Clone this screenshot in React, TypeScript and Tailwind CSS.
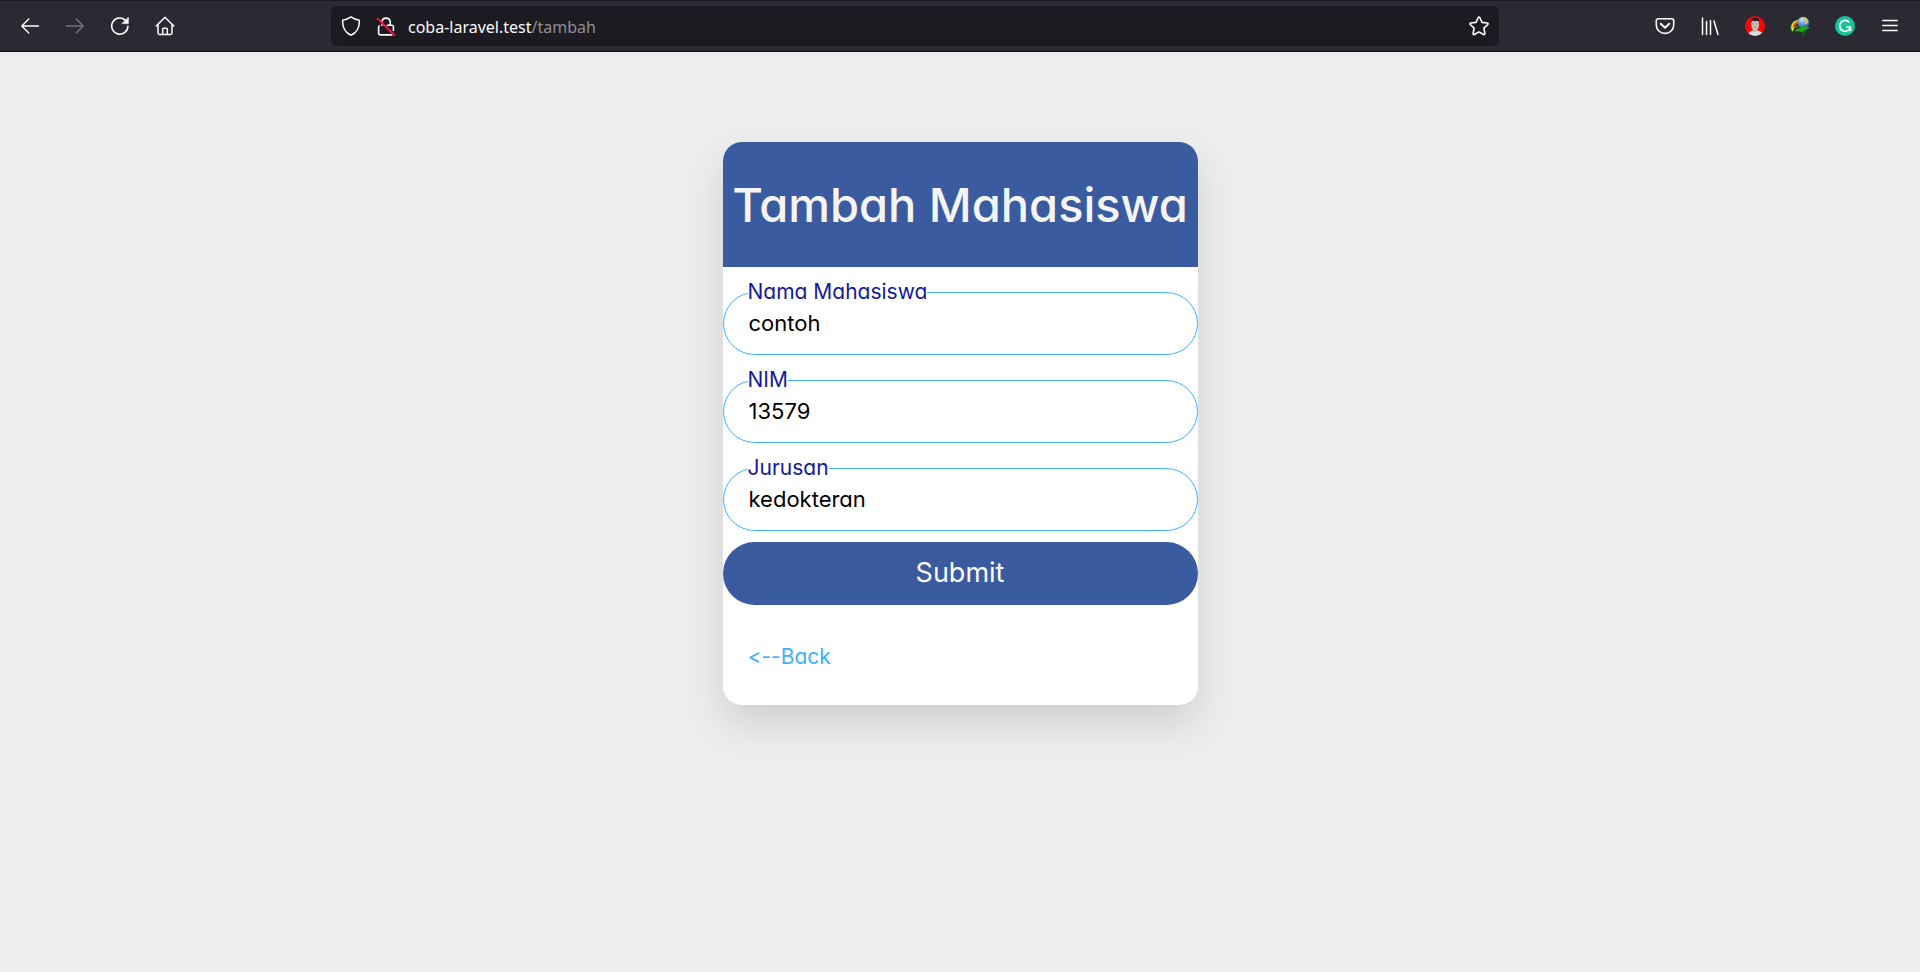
import type { ReactNode } from "react";

function ToolButton({ label, children, dim }: { label: string; children: ReactNode; dim?: boolean }) {
  return (
    <button
      type="button"
      aria-label={label}
      className={`flex h-10 w-[45px] items-center justify-center ${dim ? "text-[#77767e]" : "text-[#fbfbfe]"}`}
    >
      {children}
    </button>
  );
}

const line = {
  width: 20,
  height: 20,
  viewBox: "0 0 20 20",
  fill: "none",
  stroke: "currentColor",
  strokeWidth: 1.4,
  strokeLinecap: "round" as const,
  strokeLinejoin: "round" as const,
};

function BackIcon() {
  return (
    <svg {...line}>
      <path d="M18.5 10H1.8M8.8 3L1.8 10l7 7" />
    </svg>
  );
}

function ForwardIcon() {
  return (
    <svg {...line}>
      <path d="M1.5 10h16.7M11.2 3l7 7-7 7" />
    </svg>
  );
}

function ReloadIcon() {
  return (
    <svg {...line} strokeWidth={1.6}>
      <path d="M17.9 10.2a8.1 8.1 0 1 1-2.6-6.1" />
      <path d="M18.4 1.4v6.2h-6.2z" fill="currentColor" strokeWidth={0.6} />
    </svg>
  );
}

function HomeIcon() {
  return (
    <svg {...line} strokeWidth={1.5}>
      <path d="M1.2 10L10 1.2l8.8 8.8M3 8.6v8.2a1.7 1.7 0 0 0 1.7 1.7h10.6a1.7 1.7 0 0 0 1.7-1.7V8.6" />
      <path d="M7.7 18.3v-5a1 1 0 0 1 1-1.1h2.6a1 1 0 0 1 1 1.1v5" />
    </svg>
  );
}

function ShieldIcon() {
  return (
    <svg {...line} strokeWidth={1.5}>
      <path d="M10 .9c2.6 1.9 5.4 3 8.3 3.4C18.7 11 16.2 16.5 10 19.2 3.8 16.5 1.3 11 1.7 4.3 4.6 3.9 7.4 2.8 10 .9z" />
    </svg>
  );
}

function LockIcon() {
  return (
    <svg {...line} strokeWidth={1.6}>
      <path d="M5.9 5.5a4.2 4.2 0 0 1 8.3.3v3.4M6 8.6v.7M3.4 9.9c-.5.3-.8.8-.8 1.4v6a1.6 1.6 0 0 0 1.6 1.6h11.6M11.5 9.3h4.3a1.6 1.6 0 0 1 1.6 1.6v3.5" />
      <path d="M1.8 2.7l16.7 16.5" stroke="#f01843" strokeWidth={1.9} />
    </svg>
  );
}

function StarIcon() {
  return (
    <svg {...line} strokeWidth={1.6}>
      <path d="M9.2 1.5a.9.9 0 0 1 1.6 0l2.2 4.9 5.3.6a.9.9 0 0 1 .5 1.5l-3.9 3.7 1 5.3a.9.9 0 0 1-1.3 1L10 15.9l-4.6 2.6a.9.9 0 0 1-1.3-1l1-5.3-3.9-3.7A.9.9 0 0 1 1.7 7L7 6.4z" />
    </svg>
  );
}

function PocketIcon() {
  return (
    <svg {...line} strokeWidth={1.6}>
      <path d="M3.2 2.8h13.6a1.9 1.9 0 0 1 1.9 1.9v4.5a8.7 8.2 0 0 1-17.4 0V4.7a1.9 1.9 0 0 1 1.9-1.9z" />
      <path d="M5.7 7.7l4.3 4.1 4.3-4.1" strokeWidth={1.9} />
    </svg>
  );
}

function LibraryIcon() {
  return (
    <svg {...line} strokeWidth={1.5}>
      <path d="M2.500 2v16.500M6.500 5.500v13M10.500 4.500v14M14 5l4 13.500" />
    </svg>
  );
}

function AvatarIcon() {
  return (
    <svg width="20" height="20" viewBox="0 0 20 20">
      <clipPath id="avatar-clip">
        <circle cx="10" cy="10" r="10" />
      </clipPath>
      <g clipPath="url(#avatar-clip)">
        <rect width="20" height="20" fill="#fb0506" />
        <path d="M3 20c0-3.600 1.400-4.500 4.600-5.600h5.200c3.300 1.100 4.600 2 4.800 5.600z" fill="#dedddf" />
        <path d="M7.800 11.500h4.700v3.200l-2.400 1.700-2.300-1.700z" fill="#c9b9b6" />
        <ellipse cx="10.100" cy="8.500" rx="4" ry="5.500" fill="#d0c0bd" />
        <path d="M5.900 7.200C5.200 3.200 7.200 1.400 10.200 1.400s4.900 2 4.100 5.800l-.8-2.400c-2.200.5-4.600.5-6.800-.1z" fill="#29262b" />
        <path d="M7.700 7.900h1.500M11 7.900h1.500M8.800 11.300h2.500" stroke="#75686b" strokeWidth=".7" />
      </g>
    </svg>
  );
}

function DownloadManagerIcon() {
  return (
    <svg width="20" height="20" viewBox="0 0 20 20">
      <defs>
        <radialGradient id="globe" cx=".4" cy=".25" r=".8">
          <stop offset="0" stopColor="#d4e8f7" />
          <stop offset=".5" stopColor="#5c93d0" />
          <stop offset="1" stopColor="#1d4587" />
        </radialGradient>
      </defs>
      <path d="M8 3.500C3 4.300-.4 8.200.2 12.800c.3 2.500 1.500 3.900 3 4.400C2.600 13.700 5 11 9.500 10.600z" fill="#0d6a24" />
      <path d="M8 4C3.800 4.600.8 8.200 1.200 11.900c.2 1.700.9 2.900 2 3.500C3.200 12.200 5.500 10.300 9.200 10z" fill="#f4d92b" />
      <path d="M8.200 5.200C4.800 5.900 2.500 8.800 2.900 12 4.200 9.900 6 8.800 9 8.500z" fill="#e04a22" />
      <path d="M9 7.600c-2.600.4-4.300 1.900-5.100 4.300C5.200 10.500 7 9.800 9.500 9.800z" fill="#22202a" />
      <circle cx="13.300" cy="6.700" r="6" fill="url(#globe)" />
      <path d="M14 1.300c2.300.5 4 2.300 4.600 4.400-1.200 1.600-2.100 2.800-3.700 2.600-.5-1.600.5-2.400.1-3.500-1.200-.9-1.700-2-1-3.500z" fill="#d3c963" />
      <path d="M4.500 15.500c1.400-2.700 3.700-3.700 6.500-3.300l-.5-2.200 9.300 1-7.500 8.700-.2-3.800c-2.900-.7-5.200-.8-7.600-.4z" fill="#24a51d" />
      <path d="M12.100 15.900l7.700-4.900-7.500 8.700z" fill="#075d12" />
    </svg>
  );
}

function GrammarlyIcon() {
  return (
    <svg width="20" height="20" viewBox="0 0 20 20">
      <circle cx="10" cy="10" r="10" fill="#15c39a" />
      <path
        d="M14.200 6.400a5.400 5.400 0 1 0 .9 5.400M11.200 11h4.200v4.200"
        fill="none"
        stroke="#fff"
        strokeWidth="1.700"
        strokeLinejoin="round"
      />
    </svg>
  );
}

function MenuIcon() {
  return (
    <svg {...line} strokeWidth={1.5}>
      <path d="M2.800 4.500h14.400M2.800 9.500h14.400M2.800 14.500h14.400" />
    </svg>
  );
}

function Toolbar() {
  return (
    <header className="flex h-[52px] items-center border-t border-b border-t-[#1c1b22] border-b-[#0c0c0d] bg-[#2b2a33]">
      <nav aria-label="Navigation" className="flex w-[331px] shrink-0 pl-[7px]">
        <ToolButton label="Back"><BackIcon /></ToolButton>
        <ToolButton label="Forward" dim><ForwardIcon /></ToolButton>
        <ToolButton label="Reload"><ReloadIcon /></ToolButton>
        <ToolButton label="Home"><HomeIcon /></ToolButton>
      </nav>
      <div className="flex h-10 min-w-0 flex-1 items-center rounded-md bg-[#1c1b22] px-2.5 text-[#fbfbfe]">
        <button type="button" aria-label="Tracking protection"><ShieldIcon /></button>
        <button type="button" aria-label="Connection not secure" className="ml-[15px]"><LockIcon /></button>
        <p className="ml-3 flex-1 pt-0.5 font-['Noto_Sans',sans-serif] text-base whitespace-nowrap">
          coba-laravel.test<span className="text-[#8f8f96]">/tambah</span>
        </p>
        <button type="button" aria-label="Bookmark this page"><StarIcon /></button>
      </div>
      <div className="flex w-[421px] shrink-0 justify-end pr-2">
        <ToolButton label="Save to Pocket"><PocketIcon /></ToolButton>
        <ToolButton label="Library"><LibraryIcon /></ToolButton>
        <ToolButton label="Account"><AvatarIcon /></ToolButton>
        <ToolButton label="Download manager"><DownloadManagerIcon /></ToolButton>
        <ToolButton label="Grammarly"><GrammarlyIcon /></ToolButton>
        <ToolButton label="Menu"><MenuIcon /></ToolButton>
      </div>
    </header>
  );
}

const fields = [
  { id: "nama", label: "Nama Mahasiswa", value: "contoh" },
  { id: "nim", label: "NIM", value: "13579" },
  { id: "jurusan", label: "Jurusan", value: "kedokteran" },
];

export default function App() {
  return (
    <div className="flex min-h-screen flex-col bg-[#ededed]">
      <Toolbar />
      <main className="flex justify-center pt-[90px] pb-10 font-['Inter',sans-serif] [font-feature-settings:'cv11','calt'_0]">
        <section className="w-[475px] max-w-full overflow-hidden rounded-[19px] bg-white shadow-[0_19px_38px_rgba(0,0,0,0.12)]">
          <h1 className="bg-[#3b5ba0] text-center text-[47px] leading-[125px] font-medium whitespace-nowrap text-[#f5f5f5]">
            Tambah Mahasiswa
          </h1>
          <form onSubmit={(e) => e.preventDefault()}>
            {fields.map((f) => (
              <div key={f.id} className="relative pt-[25px]">
                <input
                  id={f.id}
                  name={f.id}
                  defaultValue={f.value}
                  className="block h-[63px] w-full rounded-full border border-[#41b0ff] bg-white px-[25px] pb-0.5 text-[22px] text-black outline-none"
                />
                <label
                  htmlFor={f.id}
                  className="absolute top-[13px] left-[25px] bg-white text-[21px] leading-6 text-[#14199b]"
                >
                  {f.label}
                </label>
              </div>
            ))}
            <button type="submit" className="mt-[11px] h-[63px] w-full rounded-full bg-[#3b5ba0] text-[27px] text-white">
              Submit
            </button>
          </form>
          <div className="px-[25px] pt-10 pb-9">
            <a href="/" className="block w-fit text-[21px] leading-6 text-[#41b0ff]">
              &lt;--Back
            </a>
          </div>
        </section>
      </main>
    </div>
  );
}
